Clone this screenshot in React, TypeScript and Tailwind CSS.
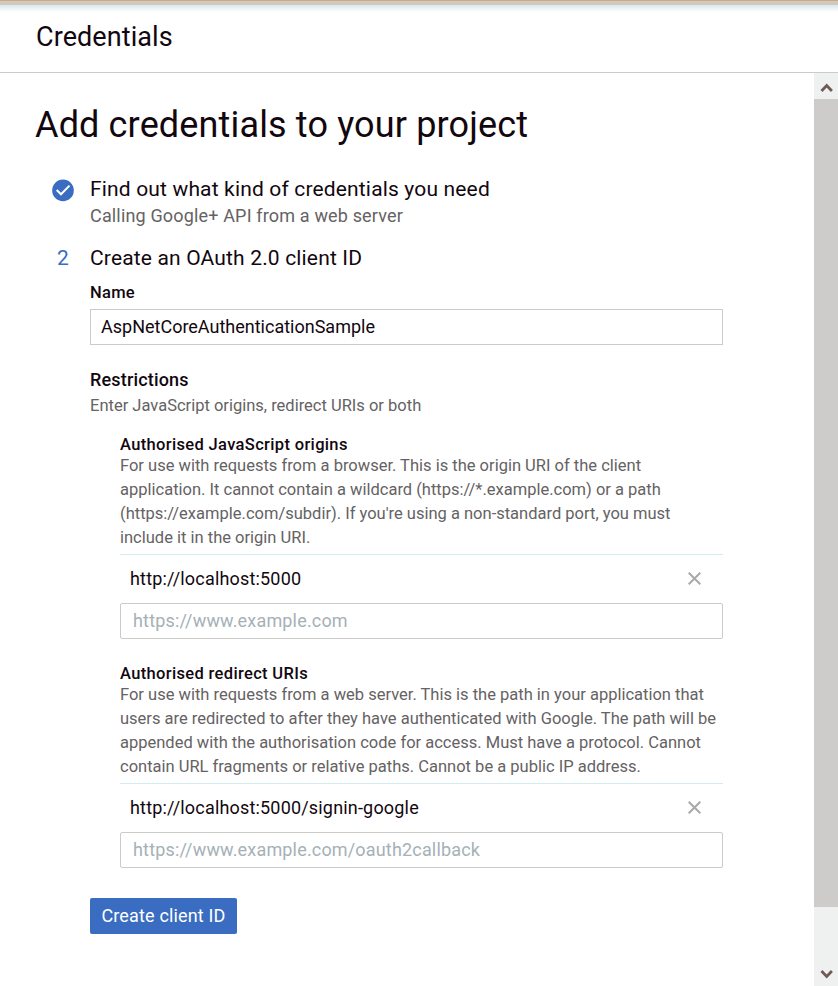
type OriginProps = {
  title: string;
  description: string[];
  value: string;
  placeholder: string;
};

function CloseIcon() {
  return (
    <svg width="13" height="13" viewBox="0 0 13 13" fill="none" stroke="#a8a9a8" strokeWidth="2" aria-hidden="true">
      <path d="M0.7 0.7L12.3 12.3M12.3 0.7L0.7 12.3" />
    </svg>
  );
}

function UriSection({ title, description, value, placeholder }: OriginProps) {
  return (
    <section className="ml-[30px]">
      <h3 className="text-[16.5px] leading-[18px] font-medium tracking-[0.34px]">{title}</h3>
      <p className="text-[16.5px] leading-6 text-[#656263]">
        {description.map((line) => (
          <span key={line} className="block whitespace-nowrap">{line}</span>
        ))}
      </p>
      <div className="mt-1 flex h-[49px] items-center justify-between border-t border-[#d3ecf1] pr-[22px] pb-0.5 pl-2.5">
        <span className="text-[18px] tracking-[0.18px]">{value}</span>
        <button type="button" aria-label="Remove"><CloseIcon /></button>
      </div>
      <input
        type="text"
        placeholder={placeholder}
        className="block h-9 w-full rounded-xs border border-[#cbcbca] px-3 pb-0.5 text-[18px] tracking-[0.17px] placeholder:text-[#a5b1b6]"
      />
    </section>
  );
}

function Chevron({ up = false }: { up?: boolean }) {
  return (
    <svg width="13" height="10" viewBox="0 0 13 10" fill="none" stroke="#705a56" strokeWidth="2.8" aria-hidden="true">
      <path d={up ? 'M1.5 8L6.7 2.6L11.9 8' : 'M1.5 2L6.7 7.4L11.9 2'} />
    </svg>
  );
}

export default function App() {
  return (
    <div className="flex h-[986px] w-[838px] flex-col overflow-hidden bg-white font-['Roboto',sans-serif] text-[#12070f]">
      <header className="flex h-[73px] flex-col border-b border-[#cbcbca]">
        <div className="h-px bg-[#d9a66b]" />
        <div className="h-1 bg-[#cccac7]" />
        <div className="h-[7px] bg-linear-to-b from-[#dde6e8] to-white" />
        <div className="mt-[7px] pl-9 text-[27px] leading-9 tracking-[0.08px]">Credentials</div>
      </header>
      <div className="flex min-h-0 flex-1">
        <main className="min-w-0 flex-1 pt-[30px]">
          <h1 className="pl-[35px] text-[36px] leading-[44px] tracking-[0.15px]">Add credentials to your project</h1>
          <div className="mt-7 flex">
            <div className="flex w-[90px] pt-1 pl-[52px]">
              <svg width="22" height="23" viewBox="0 0 22 23" aria-hidden="true">
                <circle cx="11" cy="11.4" r="10.8" fill="#3a6cc1" />
                <path d="M4.7 11L9 15.3L17.5 6.6" fill="none" stroke="white" strokeWidth="2" />
              </svg>
            </div>
            <div>
              <h2 className="text-[21px] leading-7 tracking-[0.16px]">Find out what kind of credentials you need</h2>
              <p className="mt-px text-[18px] leading-6 tracking-[0.16px] text-[#656263]">Calling Google+ API from a web server</p>
            </div>
          </div>
          <div className="mt-4 flex">
            <div className="w-[90px] pl-[57px] text-[21px] leading-7 text-[#3a6cc1]">2</div>
            <div className="w-[633px]">
              <h2 className="text-[21px] leading-7 tracking-[0.16px]">Create an OAuth 2.0 client ID</h2>
              <label htmlFor="name" className="mt-[9px] block text-[16.5px] leading-6 font-medium tracking-[0.3px]">Name</label>
              <input
                id="name"
                type="text"
                defaultValue="AspNetCoreAuthenticationSample"
                className="mt-1 block h-9 w-full border border-[#cbcbca] px-2.5 pb-0.5 text-[18px]"
              />
              <h2 className="mt-[23px] text-[18px] leading-6 font-medium tracking-[0.17px]">Restrictions</h2>
              <p className="mt-0.5 text-[16.5px] leading-6 text-[#656263]">Enter JavaScript origins, redirect URIs or both</p>
              <div className="mt-[18px] flex flex-col gap-[26px]">
                <UriSection
                  title="Authorised JavaScript origins"
                  description={[
                    'For use with requests from a browser. This is the origin URI of the client',
                    'application. It cannot contain a wildcard (https://*.example.com) or a path',
                    "(https://example.com/subdir). If you're using a non-standard port, you must",
                    'include it in the origin URI.',
                  ]}
                  value="http://localhost:5000"
                  placeholder="https://www.example.com"
                />
                <UriSection
                  title="Authorised redirect URIs"
                  description={[
                    'For use with requests from a web server. This is the path in your application that',
                    'users are redirected to after they have authenticated with Google. The path will be',
                    'appended with the authorisation code for access. Must have a protocol. Cannot',
                    'contain URL fragments or relative paths. Cannot be a public IP address.',
                  ]}
                  value="http://localhost:5000/signin-google"
                  placeholder="https://www.example.com/oauth2callback"
                />
              </div>
              <button type="button" className="mt-[30px] block h-9 w-[147px] rounded-xs bg-[#3a6cc1] pb-0.5 text-[18px] tracking-[0.16px] text-white">
                Create client ID
              </button>
            </div>
          </div>
        </main>
        <div className="flex w-6 flex-col items-center bg-[#eff1f1]">
          <div className="flex h-[26px] items-center pt-1"><Chevron up /></div>
          <div className="h-[808px] w-full bg-[#cdccca]" />
          <div className="flex flex-1 items-end pb-[7px]"><Chevron /></div>
        </div>
      </div>
    </div>
  );
}
